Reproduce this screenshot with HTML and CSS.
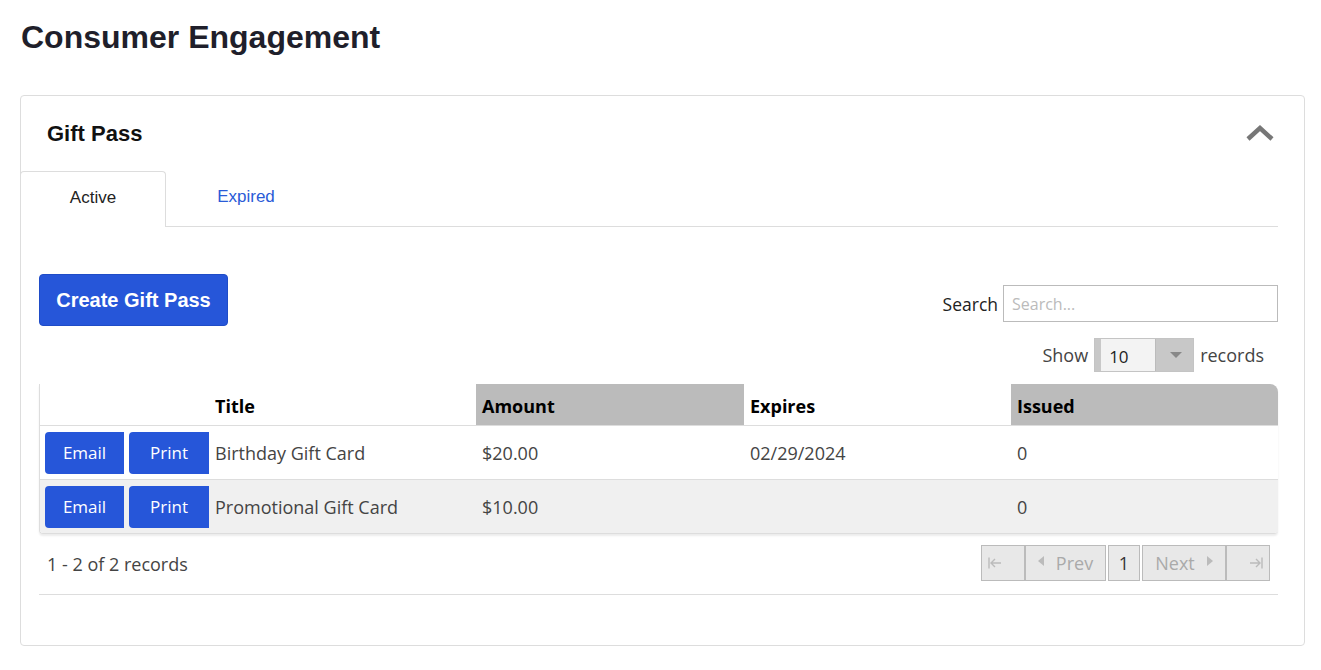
FILE: index.html
```html
<!DOCTYPE html>
<html lang="en">

<head>
  <meta charset="UTF-8">
  <meta name="viewport" content="width=device-width, initial-scale=1.0">
  <title>Consumer Engagement</title>
  <link rel="stylesheet" href="styles.css">
</head>

<body>
  <h1 class="page-title">Consumer Engagement</h1>

  <div class="card">
    <div class="card-header">
      <h2>Gift Pass</h2>
      <svg class="collapse" width="30" height="20" viewBox="0 0 30 20">
        <path d="M3 16 L15 5 L27 16" fill="none" stroke="#777" stroke-width="4.5" stroke-linejoin="miter" />
      </svg>
    </div>

    <div class="tabs">
      <div class="tab active">Active</div>
      <div class="tab">Expired</div>
      <div class="tab-fill"></div>
    </div>

    <div class="card-body">
      <div class="toolbar">
        <button class="btn-create">Create Gift Pass</button>
        <div class="filters">
          <label class="search">Search <input type="text" placeholder="Search..."></label>
          <div class="show">
            Show
            <div class="select"><span class="value">10</span><span class="arrow"></span></div>
            records
          </div>
        </div>
      </div>

      <div class="grid">
        <div class="row head">
          <div class="cell actions"></div>
          <div class="cell">Title</div>
          <div class="cell sorted">Amount</div>
          <div class="cell">Expires</div>
          <div class="cell sorted last">Issued</div>
        </div>
        <div class="row">
          <div class="cell actions"><button class="btn-row">Email</button><button class="btn-row">Print</button></div>
          <div class="cell">Birthday Gift Card</div>
          <div class="cell">$20.00</div>
          <div class="cell">02/29/2024</div>
          <div class="cell">0</div>
        </div>
        <div class="row alt">
          <div class="cell actions"><button class="btn-row">Email</button><button class="btn-row">Print</button></div>
          <div class="cell">Promotional Gift Card</div>
          <div class="cell">$10.00</div>
          <div class="cell"></div>
          <div class="cell">0</div>
        </div>
      </div>

      <div class="grid-footer">
        <span class="count">1 - 2 of 2 records</span>
        <div class="pager">
          <span class="pg first">
            <svg width="14" height="12" viewBox="0 0 14 12"><path d="M1 0.5 V11.5 M13 6 H3 M7 2 L3 6 L7 10" fill="none" stroke="#bbb" stroke-width="1.4" /></svg>
          </span>
          <span class="pg prev"><i class="tri-left"></i>Prev</span>
          <span class="pg page">1</span>
          <span class="pg next">Next<i class="tri-right"></i></span>
          <span class="pg last">
            <svg width="14" height="12" viewBox="0 0 14 12"><path d="M13 0.5 V11.5 M1 6 H11 M7 2 L11 6 L7 10" fill="none" stroke="#bbb" stroke-width="1.4" /></svg>
          </span>
        </div>
      </div>
    </div>
  </div>
</body>

</html>
```

FILE: styles.css
```css
body {
  margin: 0;
  padding: 0 16px 0 20px;
  font-family: 'Open Sans', sans-serif;
  color: #333;
  background: #fff;
}

.page-title {
  font-family: 'Liberation Sans', Arial, sans-serif;
  font-size: 32px;
  font-weight: bold;
  color: #1f1f2b;
  margin: 0;
  padding: 19px 0 0 1px;
  height: 95px;
  box-sizing: border-box;
}

.card {
  border: 1px solid #ddd;
  border-radius: 4px;
  height: 551px;
  box-sizing: border-box;
}

.card-header {
  display: flex;
  justify-content: space-between;
  align-items: center;
  height: 75px;
  padding: 0 29px 0 26px;
}

.card-header h2 {
  font-family: 'Liberation Sans', Arial, sans-serif;
  font-size: 22px;
  font-weight: bold;
  color: #111;
  margin: 0;
}

.collapse {
  margin-top: -2px;
}

.tabs {
  display: flex;
  height: 56px;
  margin-right: 26px;
  font-family: 'Liberation Sans', Arial, sans-serif;
  font-size: 17px;
}

.tab {
  width: 162px;
  display: flex;
  align-items: center;
  justify-content: center;
  color: #2a5bd7;
  border-bottom: 1px solid #ddd;
  box-sizing: border-box;
  margin-left: -1px;
  padding-bottom: 4px;
}

.tab.active {
  color: #222;
  border: 1px solid #ddd;
  border-bottom: none;
  border-radius: 4px 4px 0 0;
  width: 146px;
}

.tab-fill {
  flex-grow: 1;
  border-bottom: 1px solid #ddd;
}

.card-body {
  padding: 47px 26px 0 18px;
}

.toolbar {
  display: flex;
  justify-content: space-between;
  align-items: flex-start;
}

.btn-create {
  background: #2656d9;
  color: #fff;
  border: 1px solid #1f4cc7;
  border-radius: 4px;
  font-family: 'Liberation Sans', Arial, sans-serif;
  font-size: 20px;
  font-weight: bold;
  width: 189px;
  height: 52px;
  padding: 0;
}

.filters {
  display: flex;
  flex-direction: column;
  align-items: flex-end;
  padding-top: 11px;
  font-size: 18px;
}

.search {
  display: flex;
  align-items: center;
  gap: 5px;
  color: #222;
  font-size: 17.5px;
}

.search input {
  width: 275px;
  height: 37px;
  box-sizing: border-box;
  border: 1px solid #bbb;
  padding: 0 8px;
  font-family: 'Open Sans', sans-serif;
  font-size: 16px;
}

.search input::placeholder {
  color: #bbb;
}

.show {
  display: flex;
  align-items: center;
  gap: 6px;
  margin-top: 16px;
  margin-right: 14px;
  color: #444;
}

.select {
  display: flex;
  width: 100px;
  height: 34px;
  border: 1px solid #c4c4c4;
  box-sizing: border-box;
  background: #c8c8c8;
}

.select .value {
  width: 54px;
  margin-left: 6px;
  background: #f3f3f3;
  padding: 6px 0 0 8px;
  box-sizing: border-box;
  color: #222;
  font-size: 17px;
}

.select .arrow {
  flex-grow: 1;
  position: relative;
  border-left: 1px solid #bbb;
}

.select .arrow::after {
  content: "";
  position: absolute;
  left: 14px;
  top: 13px;
  border-left: 6px solid transparent;
  border-right: 6px solid transparent;
  border-top: 6px solid #888;
}

.grid {
  margin-top: 12px;
  border-left: 1px solid #ddd;
  border-bottom: 1px solid #ddd;
  border-radius: 0 8px 4px 4px;
  box-shadow: 0 2px 2px rgba(0, 0, 0, 0.08);
  overflow: hidden;
}

.row {
  display: grid;
  grid-template-columns: 169px 267px 268px 267px 1fr;
  height: 54px;
  border-bottom: 1px solid #ddd;
  box-sizing: border-box;
  font-size: 18px;
  color: #444;
}

.row:last-child {
  border-bottom: none;
  height: 53px;
}

.row.alt {
  background: #f0f0f0;
}

.row.head {
  height: 42px;
  color: #000;
  font-weight: bold;
  background: #fff;
}

.row.head .cell {
  padding-top: 2px;
}

.row.head .sorted {
  background: #bbb;
}

.cell {
  display: flex;
  align-items: center;
  padding-left: 6px;
}

.cell.actions {
  padding-left: 5px;
  gap: 5px;
}

.btn-row {
  background: #2656d9;
  color: #fff;
  border: none;
  border-radius: 4px 0 0 4px;
  font-family: 'Open Sans', sans-serif;
  font-size: 17px;
  width: 79px;
  height: 42px;
  padding: 0;
}

.btn-row + .btn-row {
  width: 80px;
}

.grid-footer {
  display: flex;
  justify-content: space-between;
  align-items: center;
  height: 60px;
  border-bottom: 1px solid #ddd;
  padding: 0 8px;
  margin-top: 0;
}

.count {
  font-size: 18px;
  color: #444;
}

.pager {
  display: flex;
  gap: 2px;
  margin-top: -3px;
}

.pg {
  display: flex;
  align-items: center;
  justify-content: center;
  height: 36px;
  box-sizing: border-box;
  background: #e8e8e8;
  border: 1px solid #bbb;
  color: #aaa;
  font-size: 18px;
}

.pg.first,
.pg.last {
  width: 44px;
}

.pg.first {
  justify-content: flex-start;
  padding-left: 6px;
  margin-right: -2px;
}

.pg.last {
  justify-content: flex-end;
  padding-right: 6px;
  margin-left: -2px;
}

.pg.prev {
  width: 81px;
  gap: 12px;
}

.pg.next {
  width: 84px;
  gap: 12px;
}

.pg.page {
  width: 32px;
  background: #eaeaea;
  color: #333;
}

.tri-left {
  border-top: 5px solid transparent;
  border-bottom: 5px solid transparent;
  border-right: 6px solid #bbb;
  margin-top: -3px;
}

.tri-right {
  border-top: 5px solid transparent;
  border-bottom: 5px solid transparent;
  border-left: 6px solid #bbb;
  margin-top: -3px;
}
```
